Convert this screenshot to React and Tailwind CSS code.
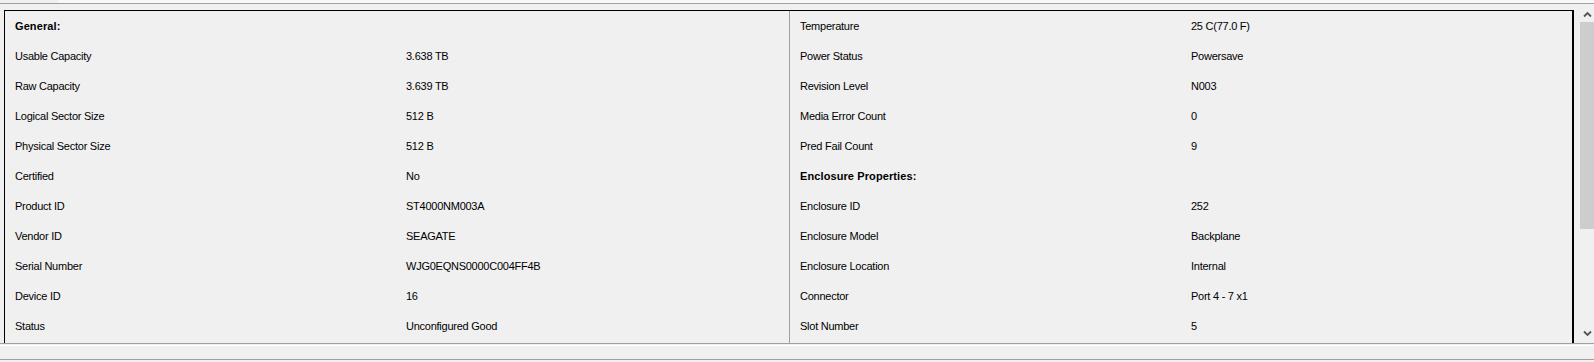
import React from 'react'

const left = [
  ['General:', '', true],
  ['Usable Capacity', '3.638 TB'],
  ['Raw Capacity', '3.639 TB'],
  ['Logical Sector Size', '512 B'],
  ['Physical Sector Size', '512 B'],
  ['Certified', 'No'],
  ['Product ID', 'ST4000NM003A'],
  ['Vendor ID', 'SEAGATE'],
  ['Serial Number', 'WJG0EQNS0000C004FF4B'],
  ['Device ID', '16'],
  ['Status', 'Unconfigured Good'],
]

const right = [
  ['Temperature', '25 C(77.0 F)'],
  ['Power Status', 'Powersave'],
  ['Revision Level', 'N003'],
  ['Media Error Count', '0'],
  ['Pred Fail Count', '9'],
  ['Enclosure Properties:', '', true],
  ['Enclosure ID', '252'],
  ['Enclosure Model', 'Backplane'],
  ['Enclosure Location', 'Internal'],
  ['Connector', 'Port 4 - 7 x1'],
  ['Slot Number', '5'],
]

const Column = ({ rows }) => (
  <div className="flex flex-col">
    {rows.map(([label, value, bold], i) => (
      <div key={i} className="flex h-[30px] items-center">
        <div className={`w-[401px] pl-[10px] ${bold ? 'font-bold tracking-[0.1px]' : 'tracking-[-0.25px]'}`}>{label}</div>
        <div className="tracking-[-0.25px]">{value}</div>
      </div>
    ))}
  </div>
)

const App = () => {
  return (
    <div className="h-[362px] w-full overflow-hidden bg-[#f0f0f0] text-[11px] text-black font-['Liberation_Sans',Arial,sans-serif]">
      {/* top edge */}
      <div className="flex h-[3px]">
        <div className="w-[58px]"></div>
        <div className="flex-1 bg-[#f8f8f8]"></div>
      </div>
      <div className="h-px bg-[#a0a0a0]"></div>

      <div className="mt-[6px] flex h-[333px]">
        <div className="ml-[4px] grid w-[1570px] grid-cols-[785px_1fr] overflow-hidden border-l border-r-2 border-t border-black">
          <div className="border-r border-[#a0a0a0]">
            <Column rows={left} />
          </div>
          <Column rows={right} />
        </div>

        {/* scrollbar */}
        <div className="relative flex-1">
          <svg className="absolute left-[9px] top-[1px]" width="9" height="7" viewBox="0 0 9 7">
            <path d="M1 5.5 L4.5 2 L8 5.5" fill="none" stroke="#555" strokeWidth="1.8" />
          </svg>
          <div className="absolute left-[6px] right-0 top-[12px] h-[207px] bg-[#cdcdcd]"></div>
          <svg className="absolute left-[9px] top-[320px]" width="9" height="7" viewBox="0 0 9 7">
            <path d="M1 1.5 L4.5 5 L8 1.5" fill="none" stroke="#555" strokeWidth="1.8" />
          </svg>
        </div>
      </div>

      {/* bottom edge */}
      <div className="h-px bg-[#a0a0a0]"></div>
      <div className="mt-px h-px bg-white"></div>
      <div className="mt-[13px] h-px bg-[#a0a0a0]"></div>
    </div>
  )
}

export default App
